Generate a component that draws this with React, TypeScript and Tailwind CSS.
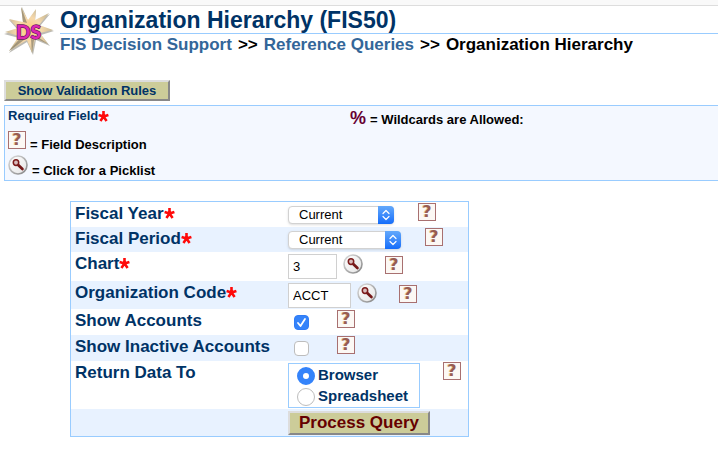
import { useState, type ReactNode } from "react";

function Required() {
  return (
    <svg
      viewBox="0 0 11 11"
      className="mt-1 size-[11px] shrink-0"
      fill="none"
      stroke="#ff0a0a"
      strokeWidth="2.6"
      role="img"
      aria-label="Required"
    >
      <path d="M5.5 0V5.6M0.6 4 5.5 5.6M10.4 4 5.5 5.6M2.4 9.9 5.5 5.6M8.6 9.9 5.5 5.6" />
    </svg>
  );
}

function HelpIcon() {
  return (
    <span className="flex size-[18px] shrink-0 items-center justify-center border border-[#a87070] bg-[#fcf8f4] font-['DejaVu_Sans',sans-serif] text-base leading-4 font-bold text-[#985c52] [text-shadow:-1px_0_0_#dcc79a]">
      ?
    </span>
  );
}

function HelpButton({ label }: { label: string }) {
  return (
    <button type="button" aria-label={`Description of ${label}`} className="flex shrink-0 pt-px">
      <HelpIcon />
    </button>
  );
}

function LoupeIcon() {
  return (
    <svg viewBox="0 0 20 20" className="size-5 shrink-0" aria-hidden="true">
      <defs>
        <linearGradient id="rim" x1="0" y1="0" x2="1" y2="1">
          <stop offset="0" stopColor="#dedede" />
          <stop offset="1" stopColor="#858585" />
        </linearGradient>
        <linearGradient id="face" x1="0" y1="0" x2="1" y2="1">
          <stop offset="0" stopColor="#ffffff" />
          <stop offset="1" stopColor="#e4e4e4" />
        </linearGradient>
      </defs>
      <circle cx="10" cy="10" r="9" fill="url(#face)" stroke="url(#rim)" strokeWidth="1.6" />
      <path d="M10.2 10 14.4 14" stroke="#741818" strokeWidth="2.8" strokeLinecap="round" />
      <ellipse cx="8" cy="7.6" rx="2.7" ry="2.9" fill="#d9bcbc" stroke="#7d1c1c" strokeWidth="1.5" />
    </svg>
  );
}

function Logo() {
  return (
    <svg viewBox="0 0 50 50" className="size-[50px] shrink-0" role="img" aria-label="Decision Support">
      <defs>
        <radialGradient id="burst" cx="25" cy="24" r="25" gradientUnits="userSpaceOnUse">
          <stop offset="0" stopColor="#ffc978" />
          <stop offset="0.5" stopColor="#f6d9ac" />
          <stop offset="1" stopColor="#c4b590" />
        </radialGradient>
      </defs>
      <path
        d="M18 1 24 15 32 4 31 15 46 8 36 20 50 25 37 29 46 40 32 34 29 49 23 36 5 47 15 32 0 28 14 24 5 14 19 17Z"
        fill="#6d6858"
        opacity="0.45"
      />
      <path
        d="M17 1 24 14 32 3 31 14 45 7 35 19 49 24 36 27 44 38 31 32 28 47 23 34 5 45 15 30 1 26 14 22 5 13 19 16Z"
        fill="url(#burst)"
      />
      <path d="M17 1 23 17 19 16ZM5 45 19 29 20 34ZM44 38 31 29 31 32ZM28 47 27 33 30 34Z" fill="#777260" opacity="0.6" />
      <text x="12" y="33" fontSize="19" fontWeight="900" fontFamily="Lato, sans-serif" fill="#dc26b4" stroke="#6c145f" strokeWidth="1.4" paintOrder="stroke">DS</text>
    </svg>
  );
}

function Row({
  label,
  htmlFor,
  required,
  shaded,
  height,
  children,
}: {
  label?: string;
  htmlFor?: string;
  required?: boolean;
  shaded?: boolean;
  height: string;
  children: ReactNode;
}) {
  return (
    <div className={`flex items-start ${height} ${shaded ? "bg-[#e8f2ff]" : "bg-white"}`}>
      <div className="flex w-[217px] shrink-0 pt-0.5 pl-1">
        {label && (
          <label htmlFor={htmlFor} className="text-[17px] leading-5 font-bold text-[#003366]">
            {label}
          </label>
        )}
        {required && <Required />}
      </div>
      {children}
    </div>
  );
}

function Dropdown({ id, width }: { id: string; width: string }) {
  return (
    <div className={`relative mt-1 h-[18px] ${width}`}>
      <select
        id={id}
        className="block h-full w-full appearance-none rounded border border-[#d2d2d2] bg-white pl-2.5 text-[13px] leading-4 text-black shadow-sm"
      >
        <option>Current</option>
      </select>
      <span className="pointer-events-none absolute inset-y-0 right-0 flex w-4 items-center justify-center rounded-r bg-linear-to-b from-[#62a8fb] to-[#126cfa]">
        <svg viewBox="0 0 10 14" className="h-3.5 w-2.5" fill="none" stroke="white" strokeWidth="1.2" aria-hidden="true">
          <path d="M2 5.5 5 2.5 8 5.5M2 8.5 5 11.5 8 8.5" strokeLinecap="round" strokeLinejoin="round" />
        </svg>
      </span>
    </div>
  );
}

function TextBox({ id, value, width }: { id: string; value: string; width: string }) {
  return (
    <input
      id={id}
      type="text"
      defaultValue={value}
      className={`mt-0.5 h-[25px] border border-[#d0d0d0] bg-white px-1 text-[13px] leading-4 text-black ${width}`}
    />
  );
}

function CheckBox({ id, initial }: { id: string; initial: boolean }) {
  const [checked, setChecked] = useState(initial);
  return (
    <span className="relative mt-1.5 ml-1.5 flex size-[15px]">
      <input
        id={id}
        type="checkbox"
        checked={checked}
        onChange={(e) => setChecked(e.target.checked)}
        className="size-full appearance-none rounded border border-[#bdbdbd] bg-white checked:border-[#2f7cf6] checked:bg-[#3483fa]"
      />
      {checked && (
        <svg viewBox="0 0 15 15" className="pointer-events-none absolute inset-0" fill="none" stroke="white" strokeWidth="1.8" aria-hidden="true">
          <path d="M4 8 6.5 11 11 4" strokeLinecap="round" strokeLinejoin="round" />
        </svg>
      )}
    </span>
  );
}

function Radio({ label, initial }: { label: string; initial?: boolean }) {
  return (
    <label className="flex h-[21px] items-center gap-[3px] text-[15px] font-bold text-[#003366]">
      <input
        type="radio"
        name="output"
        defaultChecked={initial}
        className="size-[18px] appearance-none rounded-full border border-[#bdbdbd] bg-white checked:border-[6px] checked:border-[#3483fa]"
      />
      {label}
    </label>
  );
}

export default function App() {
  return (
    <div className="bg-white font-['Liberation_Sans',Arial,sans-serif] text-black">
      <div className="h-1.5 border-b border-[#dddddd] bg-[#f9f9f9]" />

      <header className="flex pl-1">
        <Logo />
        <div className="ml-1.5 flex-1">
          <h1 className="h-7 border-b border-[#99ccff] text-[23px] leading-7 font-bold text-[#003366]">
            Organization Hierarchy (FIS50)
          </h1>
          <nav className="flex gap-1.5 text-[17px] leading-[22px] font-bold whitespace-nowrap">
            <a href="#support" className="text-[#336699]">FIS Decision Support</a>
            <span>&gt;&gt;</span>
            <a href="#queries" className="text-[#336699]">Reference Queries</a>
            <span>&gt;&gt;</span>
            <span>Organization Hierarchy</span>
          </nav>
        </div>
      </header>

      <main className="pt-6 pl-1">
        <button
          type="button"
          className="block h-[21px] w-[166px] border-2 border-t-[#dddddd] border-r-[#888888] border-b-[#888888] border-l-[#dddddd] bg-[#cccc99] text-[13px] leading-4 font-bold text-[#003366]"
        >
          Show Validation Rules
        </button>

        <section className="mt-1 flex h-[76px] border border-r-0 border-[#99ccff] bg-[#f4f8ff] pl-[3px] text-[13px] font-bold">
          <div className="w-[342px]">
            <p className="flex h-[25px] pt-px leading-[18px] text-[#003366]">
              Required Field
              <Required />
            </p>
            <p className="flex h-6 gap-1">
              <HelpIcon />
              <span className="pt-1 leading-5">= Field Description</span>
            </p>
            <p className="flex gap-1">
              <LoupeIcon />
              <span className="pt-1.5 leading-5">= Click for a Picklist</span>
            </p>
          </div>
          <p className="flex gap-1 leading-6">
            <span className="text-lg leading-6 text-[#660033]">%</span>
            <span className="pt-0.5">= Wildcards are Allowed:</span>
          </p>
        </section>

        <form
          onSubmit={(e) => e.preventDefault()}
          className="mt-5 ml-[66px] max-w-[399px] border border-[#99ccff]"
        >
          <Row label="Fiscal Year" htmlFor="year" required height="h-[25px]">
            <Dropdown id="year" width="w-[106px]" />
            <span className="w-6" />
            <HelpButton label="Fiscal Year" />
          </Row>
          <Row label="Fiscal Period" htmlFor="period" required shaded height="h-[25px]">
            <Dropdown id="period" width="w-[113px]" />
            <span className="w-6" />
            <HelpButton label="Fiscal Period" />
          </Row>
          <Row label="Chart" htmlFor="chart" required height="h-[29px]">
            <TextBox id="chart" value="3" width="w-[49px]" />
            <button type="button" aria-label="Chart picklist" className="mt-0.5 mr-[22px] ml-1.5">
              <LoupeIcon />
            </button>
            <span className="pt-[3px]">
              <HelpButton label="Chart" />
            </span>
          </Row>
          <Row label="Organization Code" htmlFor="org" required shaded height="h-[28px]">
            <TextBox id="org" value="ACCT" width="w-[63px]" />
            <button type="button" aria-label="Organization picklist" className="mt-0.5 mr-[22px] ml-1.5">
              <LoupeIcon />
            </button>
            <span className="pt-[3px]">
              <HelpButton label="Organization Code" />
            </span>
          </Row>
          <Row label="Show Accounts" htmlFor="accounts" height="h-[26px]">
            <CheckBox id="accounts" initial={true} />
            <span className="w-7" />
            <HelpButton label="Show Accounts" />
          </Row>
          <Row label="Show Inactive Accounts" htmlFor="inactive" shaded height="h-[26px]">
            <CheckBox id="inactive" initial={false} />
            <span className="w-7" />
            <HelpButton label="Show Inactive Accounts" />
          </Row>
          <Row label="Return Data To" height="h-[48px]">
            <fieldset aria-label="Return Data To" className="mt-0.5 h-[45px] w-[132px] border border-[#99ccff] pt-px pl-2">
              <Radio label="Browser" initial />
              <Radio label="Spreadsheet" />
            </fieldset>
            <span className="w-[23px]" />
            <HelpButton label="Return Data To" />
          </Row>
          <Row shaded height="h-[27px]">
            <button
              type="submit"
              className="mt-0.5 h-6 w-[142px] border-2 border-t-[#dddddd] border-r-[#888888] border-b-[#888888] border-l-[#dddddd] bg-[#cccc99] text-[17px] leading-5 font-bold text-[#660000]"
            >
              Process Query
            </button>
          </Row>
        </form>
      </main>
    </div>
  );
}
